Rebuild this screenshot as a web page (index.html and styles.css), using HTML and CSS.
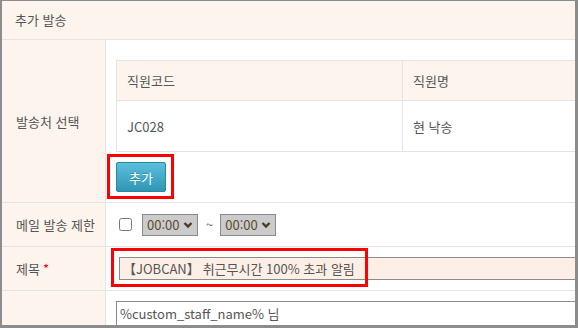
FILE: index.html
```html
<!DOCTYPE html>
<html lang="ko">
<head>
    <meta charset="UTF-8">
    <meta name="viewport" content="width=device-width, initial-scale=1.0">
    <title>추가 발송</title>
    <link rel="stylesheet" href="styles.css">
</head>
<body>
    <div class="frame">
        <div class="form">
            <div class="form-head">추가 발송</div>

            <div class="row row-target">
                <div class="label">발송처 선택</div>
                <div class="field">
                    <table class="staff">
                        <tr>
                            <th class="col-code">직원코드</th>
                            <th>직원명</th>
                        </tr>
                        <tr>
                            <td class="col-code">JC028</td>
                            <td>현 낙송</td>
                        </tr>
                    </table>
                    <div class="mark mark-btn">
                        <button class="btn-add" type="button">추가</button>
                    </div>
                </div>
            </div>

            <div class="row row-limit">
                <div class="label">메일 발송 제한</div>
                <div class="field field-inline">
                    <input type="checkbox" class="check">
                    <select class="time">
                        <option>00:00</option>
                    </select>
                    <span class="tilde">~</span>
                    <select class="time">
                        <option>00:00</option>
                    </select>
                </div>
            </div>

            <div class="row row-subject">
                <div class="label">제목 <span class="req">*</span></div>
                <div class="field field-subject">
                    <input type="text" class="subject" value="【JOBCAN】 취근무시간 100% 초과 알림">
                    <div class="mark mark-subject"></div>
                </div>
            </div>

            <div class="row row-body">
                <div class="label"></div>
                <div class="field field-body">
                    <div class="body-text">%custom_staff_name% 님</div>
                </div>
            </div>
        </div>
    </div>
</body>
</html>
```

FILE: styles.css
```css
* {
    box-sizing: border-box;
}
body {
    margin: 0;
    background-color: #fff;
    font-family: "Noto Sans CJK KR", "Noto Sans", sans-serif;
    font-size: 13px;
    color: #555;
}
.frame {
    width: 578px;
    height: 328px;
    border-style: solid;
    border-color: #8c8c8c;
    border-width: 1px 3px 3px 2px;
    overflow: hidden;
}
.form {
    width: 760px;
}
.form-head {
    height: 39px;
    line-height: 38px;
    padding-left: 13px;
    background-color: #fdf5ed;
    border-bottom: 1px solid #e4e4e4;
}
.row {
    display: flex;
    border-bottom: 1px solid #e4e4e4;
}
.label {
    width: 104px;
    flex-shrink: 0;
    display: flex;
    align-items: center;
    padding-left: 14px;
    background-color: #fdf5ed;
    border-right: 1px solid #e4e4e4;
}
.field {
    flex: 1;
    padding-left: 10px;
}
.req {
    color: #e60012;
    margin-left: 3px;
}

/* 발송처 */
.row-target .field {
    padding-top: 20px;
    padding-bottom: 3px;
}
.staff {
    width: 572px;
    border-collapse: collapse;
    border: 1px solid #e4e4e4;
}
.staff th,
.staff td {
    text-align: left;
    font-weight: normal;
    padding: 0 10px;
    border: 1px solid #e4e4e4;
}
.staff th {
    height: 40px;
    background-color: #fdf5ed;
}
.staff td {
    height: 51px;
}
.staff .col-code {
    width: 286px;
}
.mark {
    border: 3px solid #f00;
}
.mark-btn {
    display: inline-block;
    margin: 2px 0 0 -9px;
    padding: 5px 5px 4px 6px;
}
.btn-add {
    display: block;
    width: 50px;
    height: 30px;
    font-family: inherit;
    font-size: 13px;
    color: #fff;
    text-shadow: 0 -1px 0 rgba(0, 0, 0, 0.2);
    background: linear-gradient(#5bc0de, #2f96b4);
    border: 1px solid #2a86a1;
    border-radius: 2px;
}

/* 발송 제한 */
.row-limit {
    height: 44px;
}
.field-inline {
    display: flex;
    align-items: center;
    padding-left: 13px;
}
.check {
    width: 13px;
    height: 13px;
    margin: 0 10px 0 0;
}
.time {
    appearance: none;
    width: 56px;
    height: 22px;
    padding: 0 0 0 4px;
    font-family: inherit;
    font-size: 13px;
    color: #5b4a30;
    background-color: #cbcbcb;
    background-image: url("data:image/svg+xml,%3Csvg xmlns='http://www.w3.org/2000/svg' width='10' height='8' viewBox='0 0 10 8'%3E%3Cpath d='M1.5 2 L5 5.5 L8.5 2' fill='none' stroke='%234a3a22' stroke-width='2.4'/%3E%3C/svg%3E");
    background-repeat: no-repeat;
    background-position: right 4px center;
    border: 1px solid #8a8a8a;
    border-radius: 0;
}
.tilde {
    margin: 0 7px 0 8px;
    color: #666;
}

/* 제목 */
.row-subject {
    height: 44px;
}
.field-subject {
    position: relative;
    display: flex;
    align-items: center;
    padding-left: 13px;
}
.subject {
    width: 600px;
    height: 23px;
    padding: 0 0 0 3px;
    font-family: inherit;
    font-size: 13px;
    color: #555;
    background-color: #fdefe6;
    border: 1px solid #8a8a8a;
}
.mark-subject {
    position: absolute;
    left: 5px;
    top: 1px;
    width: 257px;
    height: 39px;
}

/* 본문 */
.field-body {
    padding-top: 10px;
}
.body-text {
    height: 60px;
    padding: 3px 0 0 3px;
    border: 1px solid #8a8a8a;
    border-right: 0;
    line-height: 18px;
}
```
